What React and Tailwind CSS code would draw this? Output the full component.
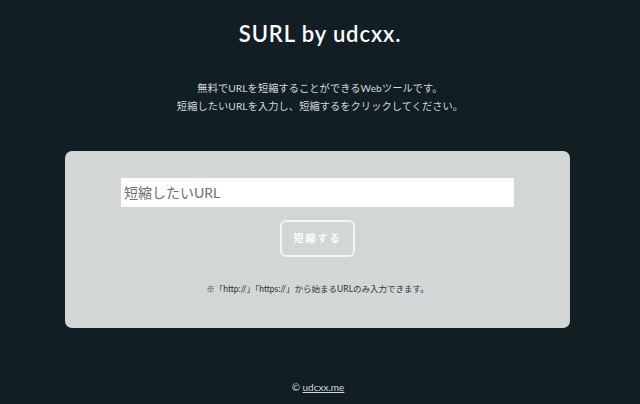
export default function App() {
  return (
    <div
      className="min-h-[404px] w-full bg-[#111f24] flex flex-col items-center"
      style={{ fontFamily: "Lato, 'Noto Sans CJK JP', sans-serif" }}
    >
      <h1 className="mt-[20px] h-[28px] text-[22px] leading-[28px] font-semibold text-white tracking-[0.9px]">
        SURL by udcxx.
      </h1>
      <div className="mt-[31px] text-[10.2px] leading-[18px] text-[#d3d8da] text-center tracking-[0.1px]">
        <p>無料でURLを短縮することができるWebツールです。</p>
        <p>短縮したいURLを入力し、短縮するをクリックしてください。</p>
      </div>
      <div className="mt-[36px] self-start ml-[65px] w-[505px] h-[177px] rounded-[7px] bg-[#d2d6d7] px-14 pt-[27px] flex flex-col items-center">
        <input
          type="text"
          placeholder="短縮したいURL"
          className="w-full h-[29px] bg-white px-[3px] text-[14px] text-[#555] placeholder:text-[#707070] outline-none"
        />
        <button className="mt-[13px] w-[75px] h-[37px] rounded-[6px] border-2 border-[#f4f5f5] text-white text-[10px] font-bold tracking-[2px]">
          短縮する
        </button>
        <p className="mt-[26px] text-[8.5px] leading-[12px] text-[#333]">
          ※「http://」「https://」から始まるURLのみ入力できます。
        </p>
      </div>
      <footer className="mt-[52px] mr-[4px] text-[10px] leading-[14px] text-[#d3d8da]">
        © <a className="underline">udcxx.me</a>
      </footer>
    </div>
  );
}
